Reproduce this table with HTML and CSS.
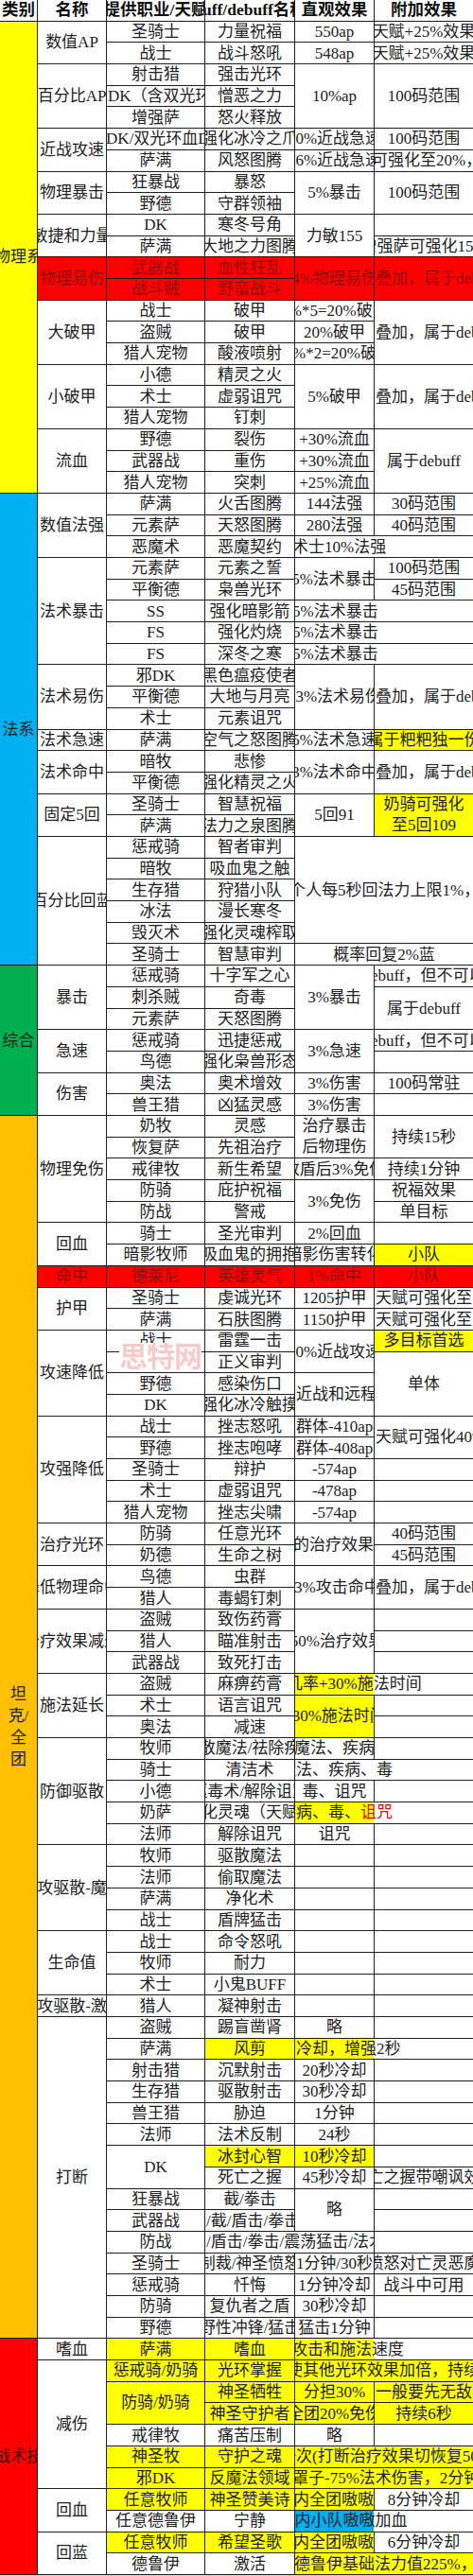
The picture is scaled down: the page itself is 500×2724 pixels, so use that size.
FILE: index.html
```html
<!DOCTYPE html>
<html lang="zh-CN">
<head>
<meta charset="utf-8">
<title>Buff表</title>
<link rel="stylesheet" href="styles.css">
</head>
<body>
<div class="t">
<div class="wm">思特网</div>
<div class="h">类别</div><div class="h">名称</div><div class="h">提供职业/天赋</div><div class="h">buff/debuff名称</div><div class="h">直观效果</div><div class="h">附加效果</div>

<div class="cat y s22">物理系</div>
<div class="s2">数值AP</div><div>圣骑士</div><div>力量祝福</div><div>550ap</div><div>天赋+25%效果</div>
<div>战士</div><div>战斗怒吼</div><div>548ap</div><div>天赋+25%效果</div>
<div class="s3">百分比AP</div><div>射击猎</div><div>强击光环</div><div class="s3">10%ap</div><div class="s3">100码范围</div>
<div class="l">DK（含双光环）</div><div>憎恶之力</div>
<div>增强萨</div><div>怒火释放</div>
<div class="s2">近战攻速</div><div>邪DK/双光环血DK</div><div>强化冰冷之爪</div><div>10%近战急速</div><div>100码范围</div>
<div>萨满</div><div>风怒图腾</div><div>16%近战急速</div><div class="l"><span class="m4">可强化至20%，持续</span></div>
<div class="s2">物理暴击</div><div>狂暴战</div><div>暴怒</div><div class="s2">5%暴击</div><div class="s2">100码范围</div>
<div>野德</div><div>守群领袖</div>
<div class="s2">敏捷和力量</div><div>DK</div><div>寒冬号角</div><div class="s2">力敏155</div><div></div>
<div>萨满</div><div>大地之力图腾</div><div>增强萨可强化15%</div>
<div class="s2 rd">物理易伤</div><div class="rd">武器战</div><div class="rd">血性狂乱</div><div class="s2 rd">4%物理易伤</div><div class="s2 rd l">叠加，属于debuff</div>
<div class="rd">战斗贼</div><div class="rd">野蛮战斗</div>
<div class="s3">大破甲</div><div>战士</div><div>破甲</div><div>4%*5=20%破甲</div><div class="s3 l">叠加，属于debuff</div>
<div>盗贼</div><div>破甲</div><div>20%破甲</div>
<div>猎人宠物</div><div>酸液喷射</div><div>10%*2=20%破甲</div>
<div class="s3">小破甲</div><div>小德</div><div>精灵之火</div><div class="s3">5%破甲</div><div class="s3 l">叠加，属于debuff</div>
<div>术士</div><div>虚弱诅咒</div>
<div>猎人宠物</div><div>钉刺</div>
<div class="s3">流血</div><div>野德</div><div>裂伤</div><div>+30%流血</div><div class="s3">属于debuff</div>
<div>武器战</div><div>重伤</div><div>+30%流血</div>
<div>猎人宠物</div><div>突刺</div><div>+25%流血</div>

<div class="cat bl s22">法系</div>
<div class="s3">数值法强</div><div>萨满</div><div>火舌图腾</div><div>144法强</div><div>30码范围</div>
<div>元素萨</div><div>天怒图腾</div><div>280法强</div><div>40码范围</div>
<div>恶魔术</div><div>恶魔契约</div><div class="w2 l"><span class="m4">术士10%法强</span></div>
<div class="s5">法术暴击</div><div>元素萨</div><div>元素之誓</div><div class="s2">5%法术暴击</div><div>100码范围</div>
<div>平衡德</div><div>枭兽光环</div><div>45码范围</div>
<div>SS</div><div>强化暗影箭</div><div class="w2 l"><span class="m4">5%法术暴击</span></div>
<div>FS</div><div>强化灼烧</div><div class="w2 l"><span class="m4">5%法术暴击</span></div>
<div>FS</div><div>深冬之寒</div><div class="w2 l"><span class="m4">5%法术暴击</span></div>
<div class="s3">法术易伤</div><div>邪DK</div><div>黑色瘟疫使者</div><div class="s3">13%法术易伤</div><div class="s3 l">叠加，属于debuff</div>
<div>平衡德</div><div>大地与月亮</div>
<div>术士</div><div>元素诅咒</div>
<div>法术急速</div><div>萨满</div><div>空气之怒图腾</div><div>5%法术急速</div><div class="y">属于粑粑独一份</div>
<div class="s2">法术命中</div><div>暗牧</div><div>悲惨</div><div class="s2">3%法术命中</div><div class="s2 l">叠加，属于debuff</div>
<div>平衡德</div><div>强化精灵之火</div>
<div class="s2">固定5回</div><div>圣骑士</div><div>智慧祝福</div><div class="s2">5回91</div><div class="s2 y wr">奶骑可强化<br>至5回109</div>
<div>萨满</div><div>法力之泉图腾</div>
<div class="s6">百分比回蓝</div><div>惩戒骑</div><div>智者审判</div><div class="s5 w2 l"><span class="m24">10个人每5秒回法力上限1%，持续15秒</span></div>
<div>暗牧</div><div>吸血鬼之触</div>
<div>生存猎</div><div>狩猎小队</div>
<div>冰法</div><div>漫长寒冬</div>
<div>毁灭术</div><div>强化灵魂榨取</div>
<div>圣骑士</div><div>智慧审判</div><div class="w2">概率回复2%蓝</div>

<div class="cat gr s7">综合</div>
<div class="s3">暴击</div><div>惩戒骑</div><div>十字军之心</div><div class="s3">3%暴击</div><div>属于debuff，但不可以叠加</div>
<div>刺杀贼</div><div>奇毒</div><div class="s2">属于debuff</div>
<div>元素萨</div><div>天怒图腾</div>
<div class="s2">急速</div><div>惩戒骑</div><div>迅捷惩戒</div><div class="s2">3%急速</div><div>属于debuff，但不可以叠加</div>
<div>鸟德</div><div>强化枭兽形态</div><div></div>
<div class="s2">伤害</div><div>奥法</div><div>奥术增效</div><div>3%伤害</div><div>100码常驻</div>
<div>兽王猎</div><div>凶猛灵感</div><div>3%伤害</div><div></div>

<div class="cat or s57 wr">坦<br>克/<br>全<br>团</div>
<div class="s5">物理免伤</div><div>奶牧</div><div>灵感</div><div class="s2 wr">治疗暴击<br>后物理伤</div><div class="s2">持续15秒</div>
<div>恢复萨</div><div>先祖治疗</div>
<div>戒律牧</div><div>新生希望</div><div>放盾后3%免伤</div><div>持续1分钟</div>
<div>防骑</div><div>庇护祝福</div><div class="s2">3%免伤</div><div>祝福效果</div>
<div>防战</div><div>警戒</div><div>单目标</div>
<div class="s2">回血</div><div>骑士</div><div>圣光审判</div><div>2%回血</div><div></div>
<div>暗影牧师</div><div>吸血鬼的拥抱</div><div>暗影伤害转化</div><div class="y">小队</div>
<div class="rd">命中</div><div class="rd">德莱尼</div><div class="rd">英雄灵气</div><div class="rd">1%命中</div><div class="rd">小队</div>
<div class="s2">护甲</div><div>圣骑士</div><div>虔诚光环</div><div>1205护甲</div><div class="l">天赋可强化至1600护甲</div>
<div>萨满</div><div>石肤图腾</div><div>1150护甲</div><div class="l">天赋可强化至1500护甲</div>
<div class="s4">攻速降低</div><div>战士</div><div>雷霆一击</div><div class="s2">20%近战攻速</div><div class="y">多目标首选</div>
<div>圣骑士</div><div>正义审判</div><div class="s3">单体</div>
<div>野德</div><div>感染伤口</div><div class="s2 l">近战和远程攻速降低</div>
<div>DK</div><div>强化冰冷触摸</div>
<div class="s5">攻强降低</div><div>战士</div><div>挫志怒吼</div><div class="l">群体-410ap</div><div class="s2 l">天赋可强化40%</div>
<div>野德</div><div>挫志咆哮</div><div class="l">群体-408ap</div>
<div>圣骑士</div><div>辩护</div><div>-574ap</div><div></div>
<div>术士</div><div>虚弱诅咒</div><div>-478ap</div><div></div>
<div>猎人宠物</div><div>挫志尖啸</div><div>-574ap</div><div></div>
<div class="s2">治疗光环</div><div>防骑</div><div>任意光环</div><div class="s2 r">提高6%的治疗效果</div><div>40码范围</div>
<div>奶德</div><div>生命之树</div><div>45码范围</div>
<div class="s2">降低物理命中</div><div>鸟德</div><div>虫群</div><div class="s2">-3%攻击命中</div><div class="s2 l">叠加，属于debuff</div>
<div>猎人</div><div>毒蝎钉刺</div>
<div class="s3">治疗效果减少</div><div>盗贼</div><div>致伤药膏</div><div class="s3">-50%治疗效果</div><div></div>
<div>猎人</div><div>瞄准射击</div><div></div>
<div>武器战</div><div>致死打击</div><div></div>
<div class="s3">施法延长</div><div>盗贼</div><div>麻痹药膏</div><div class="w2 yh l"><span class="m10">几率+30%施法时间</span></div>
<div>术士</div><div>语言诅咒</div><div class="s2 y">+30%施法时间</div><div></div>
<div>奥法</div><div>减速</div><div></div>
<div class="s5">防御驱散</div><div>牧师</div><div>驱散魔法/祛除疾病</div><div>魔法、疾病</div><div></div>
<div>骑士</div><div>清洁术</div><div class="w2 l"><span class="m17">魔法、疾病、毒</span></div>
<div>小德</div><div>驱毒术/解除诅咒</div><div>毒、诅咒</div><div></div>
<div>奶萨</div><div>净化灵魂（天赋）</div><div class="w2 yh l"><span class="m17">疾病、毒、<em class="red">诅咒</em></span></div>
<div>法师</div><div>解除诅咒</div><div>诅咒</div><div></div>
<div class="s4">进攻驱散-魔法</div><div>牧师</div><div>驱散魔法</div><div></div><div></div>
<div>法师</div><div>偷取魔法</div><div></div><div></div>
<div>萨满</div><div>净化术</div><div></div><div></div>
<div>战士</div><div>盾牌猛击</div><div></div><div></div>
<div class="s3">生命值</div><div>战士</div><div>命令怒吼</div><div></div><div></div>
<div>牧师</div><div>耐力</div><div></div><div></div>
<div>术士</div><div>小鬼BUFF</div><div></div><div></div>
<div>进攻驱散-激怒</div><div>猎人</div><div>凝神射击</div><div></div><div></div>
<div class="s15">打断</div><div>盗贼</div><div>踢盲凿肾</div><div>略</div><div></div>
<div>萨满</div><div class="y">风剪</div><div class="w2 yh l">冷却，增强2秒</div>
<div>射击猎</div><div>沉默射击</div><div>20秒冷却</div><div></div>
<div>生存猎</div><div>驱散射击</div><div>30秒冷却</div><div></div>
<div>兽王猎</div><div>胁迫</div><div>1分钟</div><div></div>
<div>法师</div><div>法术反制</div><div>24秒</div><div></div>
<div class="s2">DK</div><div class="y">冰封心智</div><div class="y">10秒冷却</div><div></div>
<div>死亡之握</div><div>45秒冷却</div><div>死亡之握带嘲讽效果</div>
<div>狂暴战</div><div>截/拳击</div><div class="s2">略</div><div></div>
<div>武器战</div><div class="l"><span class="m17">拦/截/盾击/拳击</span></div><div></div>
<div>防战</div><div class="w2 l">/盾击/拳击/震荡猛击/法术反射</div><div></div>
<div>圣骑士</div><div>制裁/神圣愤怒</div><div>1分钟/30秒</div><div>神圣愤怒对亡灵恶魔有效</div>
<div>惩戒骑</div><div>忏悔</div><div>1分钟冷却</div><div>战斗中可用</div>
<div>防骑</div><div>复仇者之盾</div><div>30秒冷却</div><div></div>
<div>野德</div><div>野性冲锋/猛击</div><div>猛击1分钟</div><div></div>

<div class="cat rc s11">战术技</div>
<div>嗜血</div><div class="y">萨满</div><div class="y">嗜血</div><div class="w2 yh l"><span class="m39">提高攻击和施法速度</span></div>
<div class="s6">减伤</div><div class="y">惩戒骑/奶骑</div><div class="y">光环掌握</div><div class="w2 y l"><span class="m10">使其他光环效果加倍，持续6秒</span></div>
<div class="s2 y">防骑/奶骑</div><div class="y">神圣牺牲</div><div class="y">分担30%</div><div class="y l">一般要先无敌再用</div>
<div class="y">神圣守护者</div><div class="y">全团20%免伤</div><div class="y">持续6秒</div>
<div>戒律牧</div><div>痛苦压制</div><div>略</div><div></div>
<div class="y">神圣牧</div><div class="y">守护之魂</div><div class="w2 y l"><span class="m17">一次(打断治疗效果切恢复50%血量)</span></div>
<div class="y">邪DK</div><div class="y">反魔法领域</div><div class="w2 y l"><span class="m4">罩子-75%法术伤害，2分钟冷却</span></div>
<div class="s2">回血</div><div class="y">任意牧师</div><div class="y">神圣赞美诗</div><div class="y r">8秒内全团嗷嗷</div><div>8分钟冷却</div>
<div>任意德鲁伊</div><div>宁静</div><div class="w2 bh l"><span class="m27">8秒内小队嗷嗷加血</span></div>
<div class="s2">回蓝</div><div class="y">任意牧师</div><div class="y">希望圣歌</div><div class="y r">8秒内全团嗷嗷</div><div>6分钟冷却</div>
<div>德鲁伊</div><div>激活</div><div class="w2 y l"><span class="m36">恢复德鲁伊基础法力值225%，</span></div>
</div>
</body>
</html>
```

FILE: styles.css
```css
html, body {
  margin: 0;
  padding: 0;
  background: #d8d8d8;
}
body {
  width: 500px;
  font-family: "Liberation Serif", "Noto Sans CJK SC", serif;
  font-size: 17px;
  color: #222;
}
.t {
  position: relative;
  display: grid;
  grid-template-columns: 39px 72px 103px 94px 83px 104px;
  grid-template-rows: repeat(120, 1fr);
  height: 2722px;
  gap: 1px;
  background: #1e1e1e;
  border-bottom: 1px solid #1e1e1e;
}
.t > div {
  background: #fff;
  display: flex;
  align-items: center;
  justify-content: center;
  overflow: hidden;
  white-space: nowrap;
  line-height: 1;
}
.t > div > span { flex-shrink: 0; }
.h { font-weight: bold; font-size: 17.5px; color: #111; }
.cat { font-size: 17px; }
.y { background: #ffff00 !important; }
.rd { background: #ff0000 !important; color: #8e0a0a; }
.bl { background: #00b0f0 !important; }
.gr { background: #00b050 !important; }
.or { background: #ffc000 !important; }
.rc { background: #ff0000 !important; color: #3a0000; }
.yh { background: linear-gradient(to right, #ffff00 83px, #fff 83px) !important; }
.bh { background: linear-gradient(to right, #00b0f0 83px, #fff 83px) !important; }
.l { justify-content: flex-start !important; padding-left: 1px; }
.r { justify-content: flex-end !important; }
.wr { white-space: normal !important; text-align: center; line-height: 22px !important; }
.cat.wr { line-height: 23px !important; }
.s2 { grid-row: span 2; }
.s3 { grid-row: span 3; }
.s4 { grid-row: span 4; }
.s5 { grid-row: span 5; }
.s6 { grid-row: span 6; }
.s7 { grid-row: span 7; }
.s11 { grid-row: span 11; }
.s15 { grid-row: span 15; }
.s22 { grid-row: span 22; }
.s57 { grid-row: span 57; }
.w2 { grid-column: span 2; }
.m4 { margin-left: -4px; }
.m10 { margin-left: -10px; }
.m17 { margin-left: -17px; }
.m24 { margin-left: -24px; }
.m27 { margin-left: -27px; }
.m36 { margin-left: -36px; }
.m39 { margin-left: -39px; }
.red { font-style: normal; color: #d01010; }
.wm {
  position: absolute;
  left: 126px;
  top: 1420px;
  font-size: 30px;
  font-weight: bold;
  color: rgba(235, 70, 70, 0.3);
  letter-spacing: -1px;
  pointer-events: none;
  z-index: 2;
}
```
